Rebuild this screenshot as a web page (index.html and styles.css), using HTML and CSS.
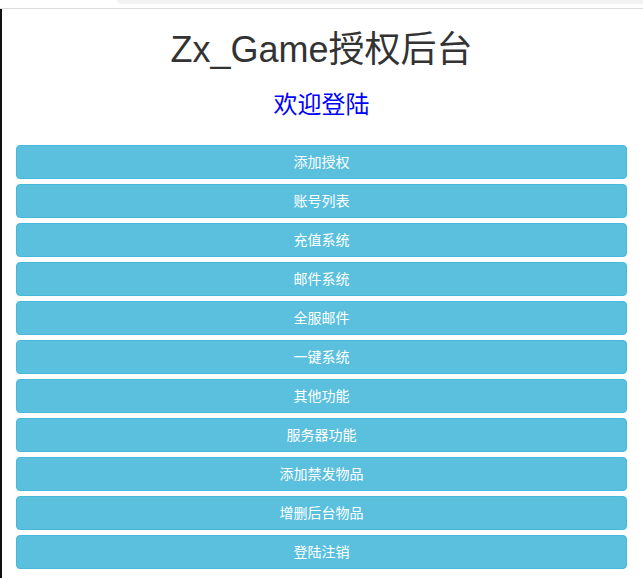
FILE: index.html
```html
<!DOCTYPE html>
<html lang="zh-CN">
<head>
<meta charset="utf-8">
<title>Zx_Game授权后台</title>
<link rel="stylesheet" href="styles.css">
</head>
<body>
<div class="topbar"><div class="tab"></div></div>
<div class="frame">
  <div class="edge"></div>
  <main class="page">
    <h1 class="title">Zx_Game授权后台</h1>
    <h3 class="subtitle">欢迎登陆</h3>
    <nav class="menu">
      <a class="btn" href="#">添加授权</a>
      <a class="btn" href="#">账号列表</a>
      <a class="btn" href="#">充值系统</a>
      <a class="btn" href="#">邮件系统</a>
      <a class="btn" href="#">全服邮件</a>
      <a class="btn" href="#">一键系统</a>
      <a class="btn" href="#">其他功能</a>
      <a class="btn" href="#">服务器功能</a>
      <a class="btn" href="#">添加禁发物品</a>
      <a class="btn" href="#">增删后台物品</a>
      <a class="btn" href="#">登陆注销</a>
    </nav>
  </main>
</div>
</body>
</html>
```
FILE: styles.css
```css
html, body {
  margin: 0;
  padding: 0;
  background: #fff;
  font-family: "Liberation Sans", "Noto Sans CJK SC", sans-serif;
  color: #333;
}
.topbar {
  height: 8px;
  border-bottom: 1px solid #dcdcdc;
  background: #fff;
}
.tab {
  margin-left: 117px;
  height: 4px;
  background: #f2f2f2;
  border-bottom-left-radius: 8px;
}
.frame {
  display: flex;
  min-height: 569px;
}
.edge {
  width: 2px;
  background: #111;
  flex: none;
}
.page {
  flex: 1;
  padding: 0 16px 0 14px;
  display: flex;
  flex-direction: column;
}
.title {
  margin: 21px 0 0;
  font-size: 36px;
  font-weight: 400;
  line-height: 40px;
  height: 40px;
  text-align: center;
  color: #333;
  font-family: "Liberation Sans", "Noto Sans CJK SC", sans-serif;
}
.subtitle {
  margin: 19px 0 0;
  font-size: 24px;
  font-weight: 400;
  line-height: 28px;
  height: 28px;
  text-align: center;
  color: #0000ff;
  font-family: "Noto Sans CJK SC", sans-serif;
}
.menu {
  margin-top: 28px;
  display: flex;
  flex-direction: column;
  gap: 5px;
}
.btn {
  display: flex;
  align-items: center;
  justify-content: center;
  height: 34px;
  padding-bottom: 2px;
  box-sizing: border-box;
  background: #5bc0de;
  border: 1px solid #46b8da;
  border-radius: 4px;
  color: #fff;
  font-size: 14px;
  font-family: "Noto Sans CJK SC", sans-serif;
  text-decoration: none;
}
```
